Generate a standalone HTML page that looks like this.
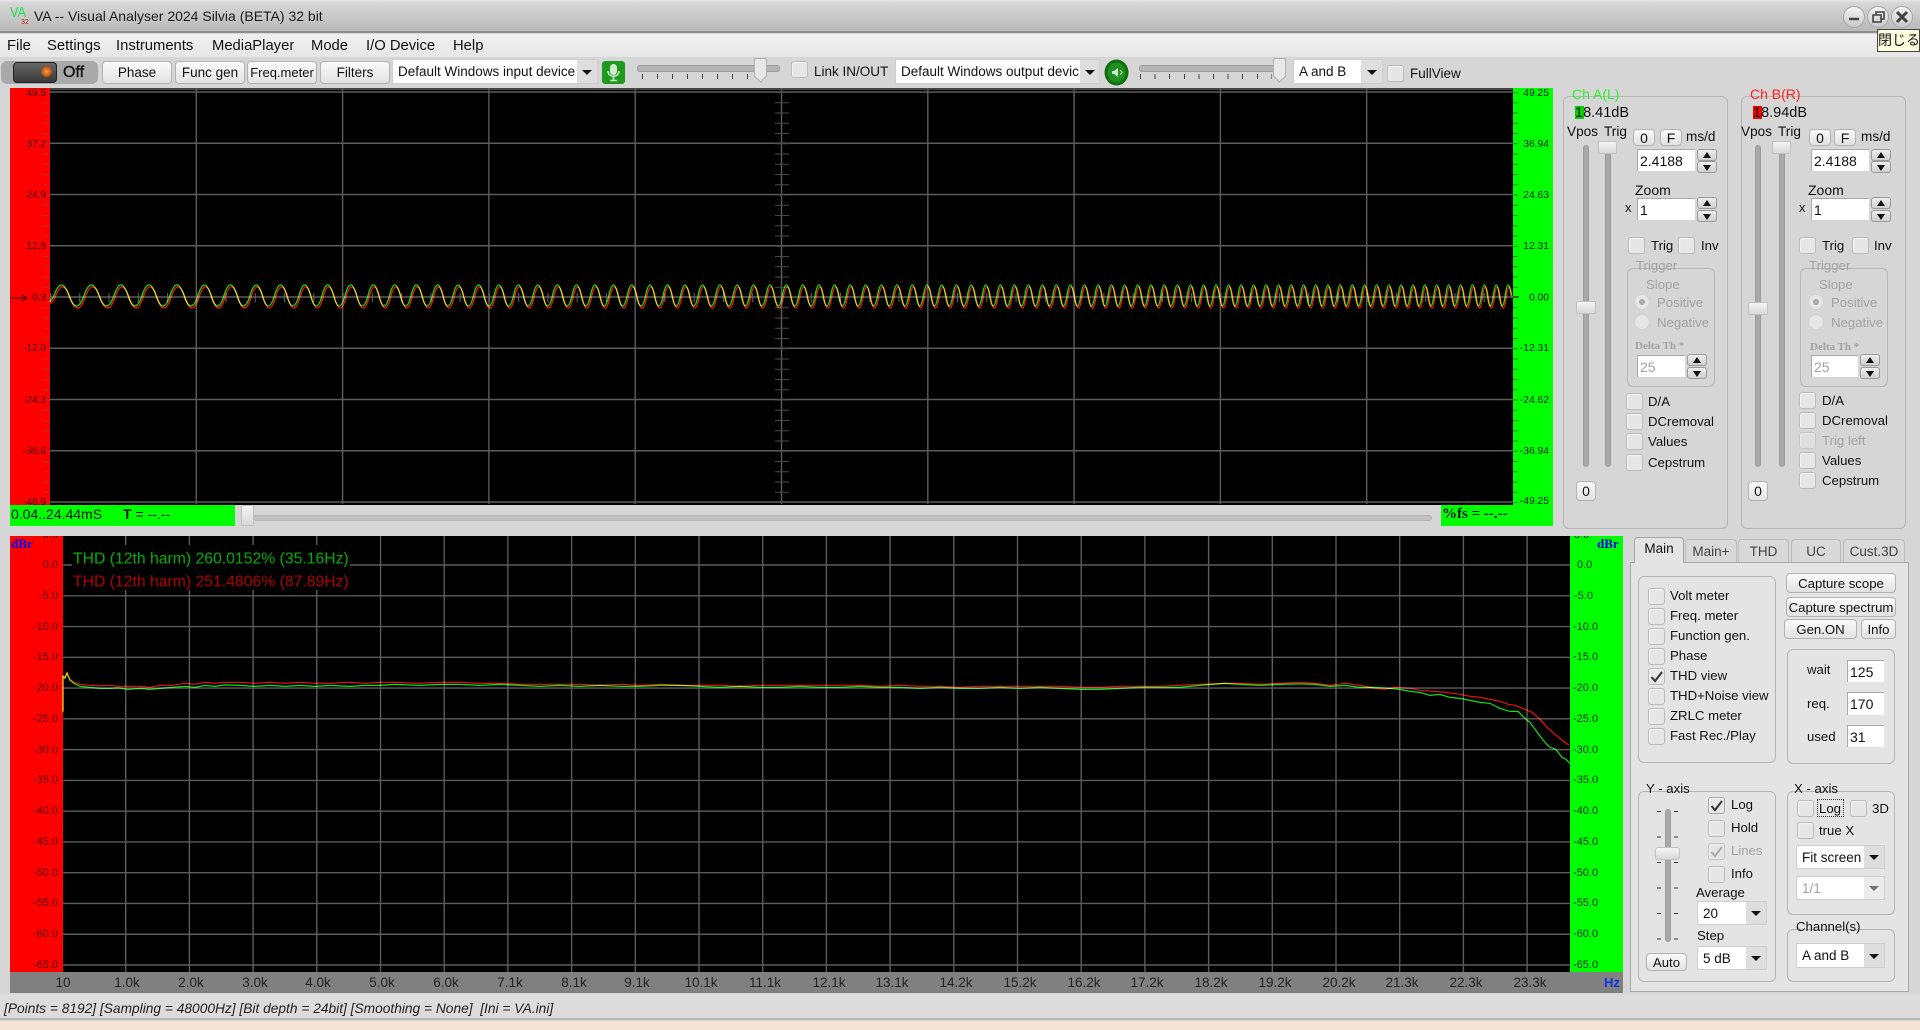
<!DOCTYPE html>
<html><head><meta charset="utf-8"><title>VA -- Visual Analyser</title>
<style>
html,body{margin:0;padding:0;background:#d6d6d6}
#r{position:relative;width:1920px;height:1030px;overflow:hidden;background:#d6d6d6;font-family:"Liberation Sans","Noto Sans CJK JP",sans-serif;font-size:13.2px;color:#111;filter:blur(.35px)}
#r div,#r span.t{position:absolute;box-sizing:border-box}
.t{position:absolute;line-height:0;white-space:nowrap}
.gr{color:#a2a2a2}
.c{width:17px;height:17px;background:#e6e6e6;border:1px solid #bcbcbc;border-radius:3px;box-shadow:inset 1px 1px 1px #f4f4f4}
.b{display:flex;align-items:center;justify-content:center;background:linear-gradient(#fafafa,#e2e2e2);border:1px solid #b2b2b2;border-radius:4px;white-space:nowrap}
.i{background:#fff;border-top:1px solid #aaa;border-left:1px solid #aaa;padding:0 0 0 2px;display:flex;align-items:center;font-size:14px}
.s{width:20px;height:12px;background:linear-gradient(#eee,#cfcfcf);border:1px solid #9a9a9a;border-radius:3px}
.s:after{content:"";position:absolute;left:5px;border-left:4.5px solid transparent;border-right:4.5px solid transparent}
.u:after{top:2px;border-bottom:6px solid #111}
.d:after{top:3px;border-top:6px solid #111}
.g{border:1px solid #b6b6b6;border-radius:6px}
.cb{background:#fff;display:flex;align-items:center;padding-left:5px;white-space:nowrap;overflow:hidden;box-shadow:0 0 0 1px #cfcfcf}
.ar{top:0;bottom:0;right:0;background:#dedede}
.ar:after{content:"";position:absolute;left:50%;top:50%;margin:-2px 0 0 -5px;border-left:5px solid transparent;border-right:5px solid transparent;border-top:5px solid #111}
.tk{background:#a8a8a8;border-radius:3px;border:1px solid #9c9c9c}
.th{background:linear-gradient(#f4f4f4,#d8d8d8);border:1px solid #c2c2c2;border-radius:2px}
.tab{background:#d9d9d9;border:1px solid #bcbcbc;border-bottom:0;border-radius:4px 4px 0 0;color:#444;font-size:13.5px;display:flex;align-items:center;justify-content:center}
</style></head><body><div id="r">

<!-- title bar -->
<div style="left:0;top:0;width:1920px;height:33px;background:linear-gradient(#e6e6e6 0,#d6d6d6 3px,#b9b9b9 31px);border-bottom:2px solid #8e8e8e"></div>
<span class="t" style="left:10px;top:13px;color:#22dd55;font-size:15px;transform:scaleX(.85);transform-origin:left">VA</span>
<span class="t" style="left:21px;top:23px;color:#d02020;font-size:7px">32</span>
<span class="t" style="left:34px;top:16px;font-size:14px;color:#1a1a1a">VA -- Visual Analyser 2024 Silvia (BETA) 32 bit</span>

<!-- window buttons -->
<svg style="position:absolute;left:1840px;top:4px" width="76" height="26" viewBox="0 0 76 26">
<defs><linearGradient id="wb" x1="0" y1="0" x2="0" y2="1"><stop offset="0" stop-color="#f4f4f4"/><stop offset="1" stop-color="#c8c8c8"/></linearGradient></defs>
<circle cx="14" cy="13" r="10.5" fill="url(#wb)" stroke="#a6a6a6"/><circle cx="38" cy="13" r="10.5" fill="url(#wb)" stroke="#a6a6a6"/><circle cx="62" cy="13" r="10.5" fill="url(#wb)" stroke="#a6a6a6"/>
<path d="M9 15h10" stroke="#444" stroke-width="2.5"/>
<path d="M33 11h8v7h-8zM36 11V8h8v7h-3" fill="none" stroke="#444" stroke-width="1.6"/>
<path d="M57 8l10 10M67 8L57 18" stroke="#444" stroke-width="3"/>
</svg>

<!-- menu -->
<div style="left:0;top:34px;width:1920px;height:23px;background:linear-gradient(#f0f0f0,#e6e6e6)"></div>
<span class="t" style="left:7px;top:46px;font-size:14.8px">File</span>
<span class="t" style="left:47px;top:46px;font-size:14.8px">Settings</span>
<span class="t" style="left:116px;top:46px;font-size:14.8px">Instruments</span>
<span class="t" style="left:212px;top:46px;font-size:14.8px">MediaPlayer</span>
<span class="t" style="left:311px;top:46px;font-size:14.8px">Mode</span>
<span class="t" style="left:366px;top:46px;font-size:14.8px">I/O Device</span>
<span class="t" style="left:453px;top:46px;font-size:14.8px">Help</span>

<!-- tooltip -->
<div style="left:1877px;top:29px;width:43px;height:23px;background:#ffffe1;border:1px solid #444;font-size:14px;line-height:21px;text-align:center;white-space:nowrap">閉じる</div>

<!-- toolbar -->
<div style="left:1px;top:61px;width:97px;height:23px;background:#a9a9a9;border-radius:6px"></div>
<div style="left:13px;top:62px;width:44px;height:21px;background:linear-gradient(#666,#3a3a3a);border:1px solid #222;border-radius:4px"></div>
<div style="left:41px;top:66px;width:11px;height:11px;border-radius:50%;background:radial-gradient(#ffa040,#b04a10 70%,#555)"></div>
<span class="t" style="left:63px;top:73px;font-size:16px;color:#111;-webkit-text-stroke:.4px #111">Off</span>
<div class="b" style="left:102px;top:61px;width:70px;height:23px;font-size:13.5px">Phase</div>
<div class="b" style="left:175px;top:61px;width:70px;height:23px;font-size:13.5px">Func gen</div>
<div class="b" style="left:247px;top:61px;width:70px;height:23px;font-size:13px">Freq.meter</div>
<div class="b" style="left:320px;top:61px;width:70px;height:23px;font-size:13.5px">Filters</div>
<div class="cb" style="left:393px;top:60px;width:204px;height:23px;font-size:13.5px">Default Windows input device<div class="ar" style="width:20px"></div></div>
<svg style="position:absolute;left:602px;top:61px" width="23" height="23" viewBox="0 0 23 23"><rect width="23" height="23" rx="3" fill="#1f9a1f"/><rect x="8" y="3" width="7" height="11" rx="3.5" fill="#cfeccf"/><path d="M6 10c0 7 11 7 11 0M11.500 15v4M8 19.500h7" fill="none" stroke="#cfeccf" stroke-width="1.500"/></svg>
<div class="tk" style="left:637px;top:65px;width:143px;height:7px;background:#b4b4b4"></div>
<div style="left:642px;top:74px;width:135px;height:5px;background:repeating-linear-gradient(90deg,#444 0 1px,transparent 1px 15px)"></div>
<svg style="position:absolute;left:754px;top:58px" width="13" height="25" viewBox="0 0 13 25"><path d="M.5 2q0-1.500 1.500-1.500h9q1.500 0 1.500 1.500v16L6.500 24 .5 18z" fill="#e8e8e8" stroke="#b0b0b0"/></svg>
<div class="c" style="left:791px;top:61px"></div>
<span class="t" style="left:814px;top:72px;font-size:13.5px">Link IN/OUT</span>
<div class="cb" style="left:896px;top:60px;width:203px;height:23px;font-size:13.5px">Default Windows output devic<div class="ar" style="width:19px"></div></div>
<svg style="position:absolute;left:1104px;top:59px" width="25" height="27" viewBox="0 0 25 27"><ellipse cx="12.500" cy="13.500" rx="12" ry="13" fill="#0f6e0f"/><ellipse cx="12.500" cy="13.500" rx="9" ry="10" fill="#1f8f1f"/><path d="M8 12h2l4-3v9l-4-3H8z" fill="#cfeccf"/><path d="M16 11l2 2.500-2 2.500" fill="none" stroke="#cfeccf"/></svg>
<div class="tk" style="left:1139px;top:65px;width:136px;height:7px;background:#b4b4b4"></div>
<div style="left:1140px;top:74px;width:132px;height:5px;background:repeating-linear-gradient(90deg,#444 0 1px,transparent 1px 14.600px)"></div>
<svg style="position:absolute;left:1273px;top:58px" width="13" height="25" viewBox="0 0 13 25"><path d="M.5 2q0-1.500 1.500-1.500h9q1.500 0 1.500 1.500v16L6.500 24 .5 18z" fill="#e8e8e8" stroke="#b0b0b0"/></svg>
<div class="cb" style="left:1294px;top:60px;width:88px;height:23px;font-size:13.5px">A and B<div class="ar" style="width:21px"></div></div>
<div class="c" style="left:1387px;top:65px"></div>
<span class="t" style="left:1410px;top:74px;font-size:13.5px">FullView</span>

<!-- plots -->
<svg style="position:absolute;left:0;top:0" width="1920" height="1030" viewBox="0 0 1920 1030" font-family="'Liberation Sans',sans-serif">
<defs>
<pattern id="tx" patternUnits="userSpaceOnUse" x="50" y="293" width="29.260" height="9"><rect width="1" height="9" fill="#666"/></pattern>
<pattern id="ty" patternUnits="userSpaceOnUse" x="775" y="92" width="14" height="10.250"><rect width="14" height="1" fill="#4a4a4a"/></pattern>
<pattern id="tr" patternUnits="userSpaceOnUse" x="44" y="92" width="6" height="10.250"><rect width="6" height="1" fill="#a83030"/></pattern>
<pattern id="tg" patternUnits="userSpaceOnUse" x="1513" y="92" width="5" height="10.250"><rect width="5" height="1" fill="#208820"/></pattern>
<path id="wave" fill="none" stroke-width="1.300" stroke-linejoin="round" d="M50 303Q52 301 54.500 296.500
q7.500-21 15 0 7.500 21 15 0 7.500-21 15 0 7.500 21 15 0
q7-21 14 0 7 21 14 0 7-21 14 0 7 21 14 0 7-21 14 0 7 21 14 0
q6.500-21 13 0 6.500 21 13 0 6.500-21 13 0 6.500 21 13 0
q6.120-21 12.250 0 6.120 21 12.250 0 6.120-21 12.250 0 6.120 21 12.250 0
q5.750-21 11.500 0 5.750 21 11.500 0 5.750-21 11.500 0 5.750 21 11.500 0 5.750-21 11.500 0 5.750 21 11.500 0
q5.380-21 10.750 0 5.380 21 10.750 0 5.380-21 10.750 0 5.380 21 10.750 0 5.380-21 10.750 0 5.380 21 10.750 0
q5.120-21 10.250 0 5.120 21 10.250 0 5.120-21 10.250 0 5.120 21 10.250 0 5.120-21 10.250 0 5.120 21 10.250 0
q4.880-21 9.750 0 4.880 21 9.750 0 4.880-21 9.750 0 4.880 21 9.750 0 4.880-21 9.750 0 4.880 21 9.750 0 4.880-21 9.750 0 4.880 21 9.750 0
q4.600-21 9.200 0 4.600 21 9.200 0 4.600-21 9.200 0 4.600 21 9.200 0 4.600-21 9.200 0 4.600 21 9.200 0 4.600-21 9.200 0 4.600 21 9.200 0
q4.380-21 8.750 0 4.380 21 8.750 0 4.380-21 8.750 0 4.380 21 8.750 0 4.380-21 8.750 0 4.380 21 8.750 0 4.380-21 8.750 0 4.380 21 8.750 0 4.380-21 8.750 0 4.380 21 8.750 0
q4.100-21 8.200 0 4.100 21 8.200 0 4.100-21 8.200 0 4.100 21 8.200 0 4.100-21 8.200 0 4.100 21 8.200 0 4.100-21 8.200 0 4.100 21 8.200 0 4.100-21 8.200 0 4.100 21 8.200 0
q3.900-21 7.800 0 3.900 21 7.800 0 3.900-21 7.800 0 3.900 21 7.800 0 3.900-21 7.800 0 3.900 21 7.800 0 3.900-21 7.800 0 3.900 21 7.800 0 3.900-21 7.800 0 3.900 21 7.800 0 3.900-21 7.800 0 3.900 21 7.800 0
q3.680-21 7.350 0 3.680 21 7.350 0 3.680-21 7.350 0 3.680 21 7.350 0 3.680-21 7.350 0 3.680 21 7.350 0 3.680-21 7.350 0 3.680 21 7.350 0 3.680-21 7.350 0 3.680 21 7.350 0 3.680-21 7.350 0 3.680 21 7.350 0
q3.500-21 7 0 3.500 21 7 0 3.500-21 7 0 3.500 21 7 0 3.500-21 7 0 3.500 21 7 0 3.500-21 7 0 3.500 21 7 0 3.500-21 7 0 3.500 21 7 0 3.500-21 7 0 3.500 21 7 0 3.500-21 7 0 3.500 21 7 0
q3.300-21 6.600 0 3.300 21 6.600 0 3.300-21 6.600 0 3.300 21 6.600 0 3.300-21 6.600 0 3.300 21 6.600 0 3.300-21 6.600 0 3.300 21 6.600 0 3.300-21 6.600 0 3.300 21 6.600 0 3.300-21 6.600 0 3.300 21 6.600 0 3.300-21 6.600 0 3.300 21 6.600 0 3.300-21 6.600 0 3.300 21 6.600 0
q3.120-21 6.250 0 3.120 21 6.250 0 3.120-21 6.250 0 3.120 21 6.250 0 3.120-21 6.250 0 3.120 21 6.250 0 3.120-21 6.250 0 3.120 21 6.250 0 3.120-21 6.250 0 3.120 21 6.250 0 3.120-21 6.250 0 3.120 21 6.250 0 3.120-21 6.250 0 3.120 21 6.250 0 3.120-21 6.250 0 3.120 21 6.250 0
q3.050-21 6.100 0 3.050 21 6.100 0 3.050-21 6.100 0 3.050 21 6.100 0 3.050-21 6.100 0 3.050 21 6.100 0 3.050-21 6.100 0 3.050 21 6.100 0 3.050-21 6.100 0 3.050 21 6.100 0 3.050-21 6.100 0 3.050 21 6.100 0 3.050-21 6.100 0 3.050 21 6.100 0 3.050-21 6.100 0 3.050 21 6.100 0
q2.980-21 5.950 0 2.980 21 5.950 0 2.980-21 5.950 0 2.980 21 5.950 0 2.980-21 5.950 0 2.980 21 5.950 0 2.980-21 5.950 0 2.980 21 5.950 0 2.980-21 5.950 0 2.980 21 5.950 0 2.980-21 5.950 0 2.980 21 5.950 0 2.980-21 5.950 0 2.980 21 5.950 0 2.980-21 5.950 0 2.980 21 5.950 0 2.980-21 5.950 0 2.980 21 5.950 0 2.980-21 5.950 0"/>
</defs>

<!-- scope -->
<rect x="10" y="88" width="40" height="417" fill="#ff0000"/>
<rect x="50" y="88" width="1463" height="417" fill="#000"/>
<rect x="1513" y="88" width="40" height="438" fill="#00ff00"/>
<rect x="10" y="505" width="225" height="21" fill="#00ff00"/>
<rect x="1441" y="505" width="72" height="21" fill="#00ff00"/>
<rect x="44" y="92" width="6" height="412" fill="url(#tr)"/>
<rect x="1513" y="92" width="5" height="412" fill="url(#tg)"/>
<path d="M50 89H1513M50 92H1513M50 143.250H1513M50 194.500H1513M50 245.750H1513M50 297H1513M50 348.250H1513M50 399.500H1513M50 450.750H1513M50 502H1513M196.300 88V504M342.600 88V504M488.900 88V504M635.200 88V504M781.500 88V504M927.800 88V504M1074.100 88V504M1220.400 88V504M1366.700 88V504" stroke="#5c5c5c" stroke-width="1.400" fill="none"/>
<rect x="50" y="293" width="1463" height="9" fill="url(#tx)"/>
<rect x="775" y="92" width="14" height="412" fill="url(#ty)"/>
<use href="#wave" stroke="#ff1010" transform="translate(.5 1)" style="mix-blend-mode:screen"/>
<use href="#wave" stroke="#10e010" transform="translate(-.5 -1)" style="mix-blend-mode:screen"/>
<g font-size="10" fill="#400000" text-anchor="end">
<text x="46" y="96">49.5</text><text x="46" y="147">37.2</text><text x="46" y="198">24.9</text><text x="46" y="249">12.6</text><text x="46" y="300.500">0.3</text><text x="46" y="351">-12.0</text><text x="46" y="403">-24.3</text><text x="46" y="454">-36.6</text><text x="46" y="505">-48.9</text>
</g>
<path d="M10 298H26M22 295l5 3-5 3" fill="none" stroke="#300" stroke-width="1"/>
<g font-size="10.300" fill="#002000" text-anchor="end">
<text x="1549" y="96">49.25</text><text x="1549" y="147">36.94</text><text x="1549" y="198">24.63</text><text x="1549" y="249">12.31</text><text x="1549" y="300.500">0.00</text><text x="1549" y="351">-12.31</text><text x="1549" y="403">-24.62</text><text x="1549" y="454">-36.94</text><text x="1549" y="504">-49.25</text>
</g>
<path d="M1513 297h6" stroke="#111"/>

<!-- spectrum -->
<rect x="10" y="536" width="53" height="436" fill="#ff0000"/>
<rect x="63" y="536" width="1507" height="436" fill="#000"/>
<rect x="1570" y="536" width="53" height="436" fill="#00ff00"/>
<rect x="10" y="972" width="1613" height="21" fill="#808080"/>
<path d="M125.700 536v436m63.700-436v436m63.700-436v436m63.700-436v436m63.700-436v436m63.700-436v436m63.700-436v436m63.700-436v436m63.700-436v436m63.700-436v436m63.700-436v436m63.700-436v436m63.700-436v436m63.700-436v436m63.700-436v436m63.700-436v436m63.700-436v436m63.700-436v436m63.700-436v436m63.700-436v436m63.700-436v436m63.700-436v436m63.700-436v436" stroke="#5c5c5c" stroke-width="1.400" fill="none"/>
<path d="M63 565h1507m-1507 30.770h1507m-1507 30.770h1507m-1507 30.770h1507m-1507 30.770h1507m-1507 30.770h1507m-1507 30.770h1507m-1507 30.770h1507m-1507 30.770h1507m-1507 30.770h1507m-1507 30.770h1507m-1507 30.770h1507m-1507 30.770h1507m-1507 30.770h1507" stroke="#5c5c5c" stroke-width="1.400" fill="none"/>
<rect x="72" y="545" width="278" height="45" fill="#000"/>
<text x="73" y="563.500" font-size="15.750" fill="#00b000">THD (12th harm) 260.0152% (35.16Hz)</text>
<text x="73" y="586.500" font-size="15.750" fill="#b00000">THD (12th harm) 251.4806% (87.89Hz)</text>
<polyline fill="none" stroke="#ee1010" stroke-width="1.200" transform="translate(0 -.7)" style="mix-blend-mode:screen" points="63,712 63,676 65,678 67,673 70,680 74,683 80,685 90,686 100,686.500 110,686 118,687 128,687 140,687 150,688 160,686 172,686 185,684 195,685 205,683 215,684 225,683 240,683 255,684 270,683 285,684 300,683 315,684 330,684 350,683 365,684 380,683 395,683 420,684 440,683 460,683 480,684 500,684 520,685 540,685 560,685 580,685 600,686 620,685 640,686 660,685 680,686 700,686 720,686 740,687 760,686 780,686 800,686 820,686 840,686 860,686 880,687 900,686 920,687 940,687 960,688 980,687 1000,687 1020,687 1040,687 1060,687 1080,688 1100,688 1120,687 1140,687 1160,687 1180,686 1200,685 1225,684 1240,684 1260,685 1280,684 1300,683 1315,684 1330,686 1345,684 1360,686 1375,689 1385,690 1395,688 1410,689 1420,691 1433,692 1445,693 1460,695 1470,697 1480,698 1490,700 1500,702 1508,705 1515,706 1525,710 1532,713 1540,720 1547,728 1555,735 1562,741 1569,746"/>
<polyline fill="none" stroke="#10e010" stroke-width="1.200" transform="translate(0 .4)" style="mix-blend-mode:screen" points="63,712 63,676 65,678 67,673 70,680 74,683 80,686 90,687 100,688 110,688 118,687.500 128,689 140,688 150,689 160,688 172,687 185,686 195,687 205,685 215,686 225,684.500 240,685 255,686 270,685 285,686 300,685 315,686 330,685 350,686 365,685 380,685 395,684 420,685 440,684 460,684 480,685 500,684 520,685 540,686 560,685 580,686 600,685 620,686 640,686 660,685 680,685 700,686 720,687 740,686 760,687 780,687 800,686 820,687 840,687 860,686 880,687 900,687 920,688 940,687 960,688 980,688 1000,687 1020,688 1040,687 1060,688 1080,689 1100,689 1120,688 1140,687 1160,687 1180,687 1200,685 1225,683 1240,684 1260,685 1280,684 1300,683.500 1315,684 1330,686 1345,685 1360,687 1375,687 1390,688 1400,689 1410,691 1420,692 1430,695 1440,694 1450,697 1460,698 1470,700 1480,702 1490,703 1500,708 1510,711 1518,711 1525,718 1530,722 1538,733 1545,742 1550,747 1556,749 1562,757 1566,759 1570,763"/>
<g font-size="11" fill="#5a0000" text-anchor="end">
<text x="58" y="538">5.0</text><text x="58" y="568">0.0</text><text x="58" y="599">-5.0</text><text x="58" y="630">-10.0</text><text x="58" y="660">-15.0</text><text x="58" y="691">-20.0</text><text x="58" y="722">-25.0</text><text x="58" y="753">-30.0</text><text x="58" y="783">-35.0</text><text x="58" y="814">-40.0</text><text x="58" y="845">-45.0</text><text x="58" y="876">-50.0</text><text x="58" y="906">-55.0</text><text x="58" y="937">-60.0</text><text x="58" y="968">-65.0</text>
</g>
<g font-size="11" fill="#003000">
<text x="1574" y="538">5.0</text><text x="1577" y="568">0.0</text><text x="1574" y="599">-5.0</text><text x="1573" y="630">-10.0</text><text x="1573" y="660">-15.0</text><text x="1573" y="691">-20.0</text><text x="1573" y="722">-25.0</text><text x="1573" y="753">-30.0</text><text x="1573" y="783">-35.0</text><text x="1573" y="814">-40.0</text><text x="1573" y="845">-45.0</text><text x="1573" y="876">-50.0</text><text x="1573" y="906">-55.0</text><text x="1573" y="937">-60.0</text><text x="1573" y="968">-65.0</text>
</g>
<rect x="0" y="527" width="1630" height="9" fill="#d6d6d6"/>
<text x="11" y="548" font-size="13" font-weight="bold" font-family="'Liberation Serif',serif" fill="#0000ee">dBr</text>
<text x="1597" y="548" font-size="13" font-weight="bold" font-family="'Liberation Serif',serif" fill="#0000ee">dBr</text>
<g font-size="13.500" fill="#222" text-anchor="middle">
<text x="63" y="987">10</text><text x="127" y="987">1.0k</text><text x="191" y="987">2.0k</text><text x="255" y="987">3.0k</text><text x="318" y="987">4.0k</text><text x="382" y="987">5.0k</text><text x="446" y="987">6.0k</text><text x="510" y="987">7.1k</text><text x="574" y="987">8.1k</text><text x="637" y="987">9.1k</text><text x="701" y="987">10.1k</text><text x="765" y="987">11.1k</text><text x="829" y="987">12.1k</text><text x="892" y="987">13.1k</text><text x="956" y="987">14.2k</text><text x="1020" y="987">15.2k</text><text x="1084" y="987">16.2k</text><text x="1147" y="987">17.2k</text><text x="1211" y="987">18.2k</text><text x="1275" y="987">19.2k</text><text x="1339" y="987">20.2k</text><text x="1402" y="987">21.3k</text><text x="1466" y="987">22.3k</text><text x="1530" y="987">23.3k</text>
</g>
<text x="1604" y="987" font-size="13" font-weight="bold" fill="#1030e0">Hz</text>
</svg>

<!-- scope status -->
<span class="t" style="left:11px;top:514px;font-size:14px">0.04..24.44mS</span>
<span class="t" style="left:123px;top:514px;font-size:14px"><b>T</b> = --.--</span>
<div class="tk" style="left:253px;top:515px;width:1179px;height:6px;background:#c2c2c2;border-color:#b4b4b4"></div>
<div class="th" style="left:241px;top:505px;width:13px;height:21px"></div>
<span class="t" style="left:1442px;top:514px;font-size:15px;font-family:'Liberation Serif',serif;font-weight:bold">%fs = --.--</span>

<!-- Channel A -->
<div class="g" style="left:1563px;top:96px;width:165px;height:433px"></div>
<span class="t" style="left:1570px;top:94px;font-size:14px;color:#30f030;background:#d6d6d6;padding:0 2px">Ch A(L)</span>
<div style="left:1575px;top:106px;width:9px;height:13px;background:#00d000"></div>
<span class="t" style="left:1575px;top:113px;font-size:14.500px">18.41dB</span>
<span class="t" style="left:1567px;top:132px;font-size:13.600px">Vpos</span>
<span class="t" style="left:1604px;top:132px;font-size:13.600px">Trig</span>
<div class="b" style="left:1633px;top:129px;width:22px;height:17px;font-size:14px">0</div>
<div class="b" style="left:1660px;top:129px;width:22px;height:17px;font-size:14px">F</div>
<span class="t" style="left:1686px;top:137px;font-size:13.600px">ms/d</span>
<div class="i" style="left:1637px;top:149px;width:58px;height:22px">2.4188</div>
<div class="s u" style="left:1697px;top:149px"></div><div class="s d" style="left:1697px;top:161px"></div>
<span class="t" style="left:1635px;top:190px;font-size:14px">Zoom</span>
<span class="t" style="left:1625px;top:208px;font-size:13px">x</span>
<div class="i" style="left:1637px;top:198px;width:58px;height:22px">1</div>
<div class="s u" style="left:1697px;top:197px"></div><div class="s d" style="left:1697px;top:210px"></div>
<div class="c" style="left:1628px;top:237px"></div><span class="t" style="left:1651px;top:246px">Trig</span>
<div class="c" style="left:1678px;top:237px"></div><span class="t" style="left:1701px;top:246px">Inv</span>
<div class="g" style="left:1627px;top:268px;width:88px;height:119px"></div>
<span class="t gr" style="left:1634px;top:266px;background:#d6d6d6;padding:0 2px">Trigger</span>
<span class="t gr" style="left:1646px;top:285px">Slope</span>
<div style="left:1634px;top:294px;width:16px;height:16px;border-radius:50%;background:#e6e6e6;border:1px solid #d0d0d0"></div><div style="left:1639px;top:299px;width:6px;height:6px;border-radius:50%;background:#aaa"></div>
<span class="t gr" style="left:1657px;top:303px">Positive</span>
<div style="left:1634px;top:314px;width:16px;height:16px;border-radius:50%;background:#e6e6e6;border:1px solid #d0d0d0"></div>
<span class="t gr" style="left:1657px;top:323px">Negative</span>
<span class="t gr" style="left:1635px;top:346px;font-size:11px;font-family:'Liberation Serif',serif;font-weight:bold">Delta Th *</span>
<div class="i gr" style="left:1637px;top:355px;width:48px;height:22px">25</div>
<div class="s u" style="left:1687px;top:354px"></div><div class="s d" style="left:1687px;top:367px"></div>
<div class="c" style="left:1626px;top:393px"></div><span class="t" style="left:1648px;top:402px">D/A</span>
<div class="c" style="left:1626px;top:413px"></div><span class="t" style="left:1648px;top:422px">DCremoval</span>
<div class="c" style="left:1626px;top:433px"></div><span class="t" style="left:1648px;top:442px">Values</span>
<div class="c" style="left:1626px;top:454px"></div><span class="t" style="left:1648px;top:463px">Cepstrum</span>
<div class="tk" style="left:1583px;top:145px;width:6px;height:322px"></div>
<div class="tk" style="left:1605px;top:150px;width:6px;height:317px"></div>
<div class="th" style="left:1598px;top:141px;width:19px;height:13px"></div>
<div class="th" style="left:1576px;top:301px;width:20px;height:13px"></div>
<div class="b" style="left:1576px;top:481px;width:20px;height:20px;font-size:14px">0</div>

<!-- Channel B -->
<div class="g" style="left:1741px;top:96px;width:165px;height:433px"></div>
<span class="t" style="left:1748px;top:94px;font-size:14px;color:#ff2020;background:#d6d6d6;padding:0 2px">Ch B(R)</span>
<div style="left:1753px;top:106px;width:9px;height:13px;background:#ee0000"></div>
<span class="t" style="left:1753px;top:113px;font-size:14.500px">18.94dB</span>
<span class="t" style="left:1741px;top:132px;font-size:13.600px">Vpos</span>
<span class="t" style="left:1778px;top:132px;font-size:13.600px">Trig</span>
<div class="b" style="left:1809px;top:129px;width:22px;height:17px;font-size:14px">0</div>
<div class="b" style="left:1834px;top:129px;width:22px;height:17px;font-size:14px">F</div>
<span class="t" style="left:1861px;top:137px;font-size:13.600px">ms/d</span>
<div class="i" style="left:1811px;top:149px;width:58px;height:22px">2.4188</div>
<div class="s u" style="left:1871px;top:149px"></div><div class="s d" style="left:1871px;top:161px"></div>
<span class="t" style="left:1808px;top:190px;font-size:14px">Zoom</span>
<span class="t" style="left:1799px;top:208px;font-size:13px">x</span>
<div class="i" style="left:1811px;top:198px;width:58px;height:22px">1</div>
<div class="s u" style="left:1871px;top:197px"></div><div class="s d" style="left:1871px;top:210px"></div>
<div class="c" style="left:1799px;top:237px"></div><span class="t" style="left:1822px;top:246px">Trig</span>
<div class="c" style="left:1852px;top:237px"></div><span class="t" style="left:1874px;top:246px">Inv</span>
<div class="g" style="left:1800px;top:268px;width:88px;height:119px"></div>
<span class="t gr" style="left:1807px;top:266px;background:#d6d6d6;padding:0 2px">Trigger</span>
<span class="t gr" style="left:1819px;top:285px">Slope</span>
<div style="left:1808px;top:294px;width:16px;height:16px;border-radius:50%;background:#e6e6e6;border:1px solid #d0d0d0"></div><div style="left:1813px;top:299px;width:6px;height:6px;border-radius:50%;background:#aaa"></div>
<span class="t gr" style="left:1831px;top:303px">Positive</span>
<div style="left:1808px;top:314px;width:16px;height:16px;border-radius:50%;background:#e6e6e6;border:1px solid #d0d0d0"></div>
<span class="t gr" style="left:1831px;top:323px">Negative</span>
<span class="t gr" style="left:1810px;top:347px;font-size:11px;font-family:'Liberation Serif',serif;font-weight:bold">Delta Th *</span>
<div class="i gr" style="left:1811px;top:355px;width:47px;height:22px">25</div>
<div class="s u" style="left:1860px;top:354px"></div><div class="s d" style="left:1860px;top:367px"></div>
<div class="c" style="left:1799px;top:392px"></div><span class="t" style="left:1822px;top:401px">D/A</span>
<div class="c" style="left:1799px;top:412px"></div><span class="t" style="left:1822px;top:421px">DCremoval</span>
<div class="c" style="left:1799px;top:432px;opacity:.6"></div><span class="t gr" style="left:1822px;top:441px">Trig left</span>
<div class="c" style="left:1799px;top:452px"></div><span class="t" style="left:1822px;top:461px">Values</span>
<div class="c" style="left:1799px;top:472px"></div><span class="t" style="left:1822px;top:481px">Cepstrum</span>
<div class="tk" style="left:1755px;top:145px;width:6px;height:322px"></div>
<div class="tk" style="left:1779px;top:150px;width:6px;height:317px"></div>
<div class="th" style="left:1772px;top:141px;width:19px;height:13px"></div>
<div class="th" style="left:1748px;top:302px;width:20px;height:13px"></div>
<div class="b" style="left:1748px;top:481px;width:20px;height:20px;font-size:14px">0</div>

<!-- tabs -->
<div style="left:1630px;top:562px;width:279px;height:430px;background:#e4e4e4;border:1px solid #a8a8a8"></div>
<div class="tab" style="left:1685px;top:539px;width:52px;height:23px">Main+</div>
<div class="tab" style="left:1738px;top:539px;width:51px;height:23px">THD</div>
<div class="tab" style="left:1791px;top:539px;width:50px;height:23px">UC</div>
<div class="tab" style="left:1843px;top:539px;width:62px;height:23px">Cust.3D</div>
<div class="tab" style="left:1634px;top:537px;width:50px;height:26px;background:#e4e4e4;border-color:#a8a8a8;color:#111;padding-bottom:4px">Main</div>

<div class="g" style="left:1638px;top:576px;width:138px;height:187px"></div>
<div class="c" style="left:1648px;top:588px"></div><span class="t" style="left:1670px;top:596px">Volt meter</span>
<div class="c" style="left:1648px;top:608px"></div><span class="t" style="left:1670px;top:616px">Freq. meter</span>
<div class="c" style="left:1648px;top:628px"></div><span class="t" style="left:1670px;top:636px">Function gen.</span>
<div class="c" style="left:1648px;top:648px"></div><span class="t" style="left:1670px;top:656px">Phase</span>
<div class="c" style="left:1648px;top:668px"></div><span class="t" style="left:1670px;top:676px">THD view</span>
<svg style="position:absolute;left:1650px;top:670px" width="13" height="13" viewBox="0 0 13 13"><path d="M1.500 7l3.500 4 7-9" fill="none" stroke="#333" stroke-width="2"/></svg>
<div class="c" style="left:1648px;top:688px"></div><span class="t" style="left:1670px;top:696px">THD+Noise view</span>
<div class="c" style="left:1648px;top:708px"></div><span class="t" style="left:1670px;top:716px">ZRLC meter</span>
<div class="c" style="left:1648px;top:728px"></div><span class="t" style="left:1670px;top:736px">Fast Rec./Play</span>

<div class="b" style="left:1786px;top:573px;width:110px;height:20px">Capture scope</div>
<div class="b" style="left:1786px;top:597px;width:110px;height:20px">Capture spectrum</div>
<div class="b" style="left:1784px;top:619px;width:73px;height:20px">Gen.ON</div>
<div class="b" style="left:1861px;top:619px;width:35px;height:20px">Info</div>
<div class="g" style="left:1787px;top:649px;width:108px;height:115px"></div>
<span class="t" style="left:1807px;top:670px">wait</span><div class="i" style="left:1847px;top:660px;width:37px;height:22px">125</div>
<span class="t" style="left:1807px;top:704px">req.</span><div class="i" style="left:1847px;top:692px;width:37px;height:23px">170</div>
<span class="t" style="left:1807px;top:737px">used</span><div class="i" style="left:1847px;top:725px;width:37px;height:22px">31</div>

<!-- Y axis -->
<div class="g" style="left:1638px;top:791px;width:138px;height:191px"></div>
<span class="t" style="left:1645px;top:789px;background:#e4e4e4;padding:0 1px">Y - axis</span>
<div class="tk" style="left:1665px;top:809px;width:6px;height:133px"></div>
<div style="left:1657px;top:811px;width:4px;height:130px;background:repeating-linear-gradient(#333 0 1px,transparent 1px 25.500px)"></div>
<div style="left:1674px;top:811px;width:4px;height:130px;background:repeating-linear-gradient(#333 0 1px,transparent 1px 25.500px)"></div>
<div class="th" style="left:1655px;top:847px;width:25px;height:13px;border-radius:3px"></div>
<div class="b" style="left:1646px;top:953px;width:41px;height:18px">Auto</div>
<div class="c" style="left:1708px;top:797px;border-color:#aaa"></div><span class="t" style="left:1731px;top:805px">Log</span>
<svg style="position:absolute;left:1710px;top:799px" width="13" height="13" viewBox="0 0 13 13"><path d="M1.500 7l3.500 4 7-9" fill="none" stroke="#333" stroke-width="2"/></svg>
<div class="c" style="left:1708px;top:820px"></div><span class="t" style="left:1731px;top:828px">Hold</span>
<div class="c" style="left:1708px;top:843px;opacity:.7"></div><span class="t gr" style="left:1731px;top:851px">Lines</span>
<svg style="position:absolute;left:1710px;top:845px" width="13" height="13" viewBox="0 0 13 13"><path d="M1.500 7l3.500 4 7-9" fill="none" stroke="#aaa" stroke-width="2"/></svg>
<div class="c" style="left:1708px;top:866px"></div><span class="t" style="left:1731px;top:874px">Info</span>
<span class="t" style="left:1696px;top:893px">Average</span>
<div class="cb" style="left:1698px;top:902px;width:68px;height:22px;font-size:13.500px">20<div class="ar" style="width:20px"></div></div>
<span class="t" style="left:1697px;top:936px">Step</span>
<div class="cb" style="left:1698px;top:947px;width:68px;height:22px;font-size:13.500px">5 dB<div class="ar" style="width:20px"></div></div>

<!-- X axis -->
<div class="g" style="left:1787px;top:791px;width:108px;height:124px"></div>
<span class="t" style="left:1793px;top:789px;background:#e4e4e4;padding:0 1px">X - axis</span>
<div class="c" style="left:1797px;top:800px"></div>
<div style="left:1817px;top:799px;width:27px;height:18px;border:1px dotted #333"></div><span class="t" style="left:1819px;top:809px">Log</span>
<div class="c" style="left:1850px;top:800px"></div><span class="t" style="left:1872px;top:809px">3D</span>
<div class="c" style="left:1797px;top:822px"></div><span class="t" style="left:1819px;top:831px">true X</span>
<div class="cb" style="left:1797px;top:846px;width:87px;height:22px;font-size:13.500px">Fit screen<div class="ar" style="width:20px"></div></div>
<div class="cb gr" style="left:1797px;top:877px;width:87px;height:22px;font-size:13.500px">1/1<div class="ar" style="width:20px;opacity:.6"></div></div>
<div class="g" style="left:1787px;top:929px;width:108px;height:53px"></div>
<span class="t" style="left:1795px;top:927px;background:#e4e4e4;padding:0 1px">Channel(s)</span>
<div class="cb" style="left:1797px;top:944px;width:87px;height:23px;font-size:13.500px">A and B<div class="ar" style="width:20px"></div></div>

<!-- status bar -->
<div style="left:0;top:994px;width:1920px;height:26px;background:#dcdcdc;border-bottom:2px solid #b8b8b8"></div>
<span class="t" style="left:4px;top:1009px;font-size:13.750px;font-style:italic;color:#222;white-space:pre">[Points = 8192] [Sampling = 48000Hz] [Bit depth = 24bit] [Smoothing = None]  [Ini = VA.ini]</span>
<div style="left:0;top:1021px;width:1920px;height:9px;background:#f5e5d7"></div>

</div></body></html>
